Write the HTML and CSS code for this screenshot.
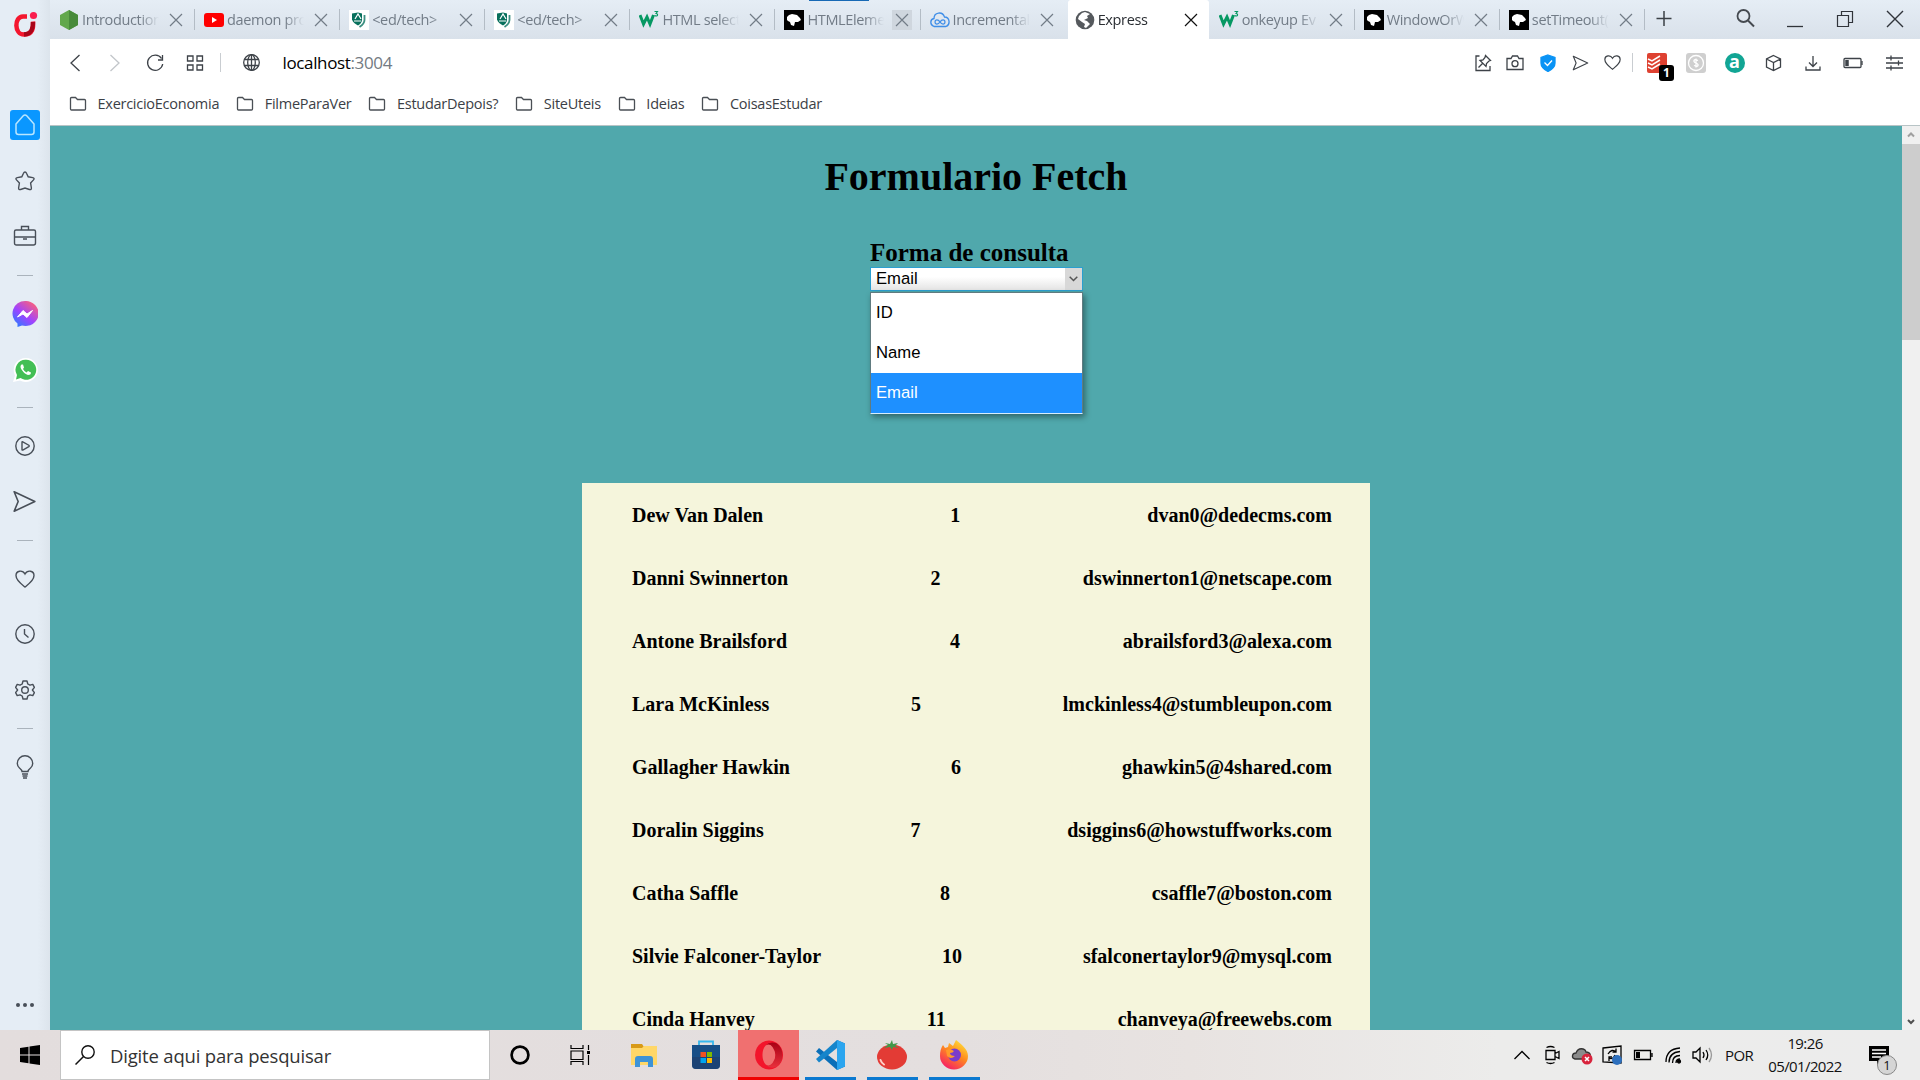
FILE: index.html
```html
<!DOCTYPE html>
<html lang="pt-BR">
<head>
<meta charset="utf-8">
<title>Express</title>
<link rel="stylesheet" href="styles.css">
</head>
<body>
<svg class="defs" width="0" height="0">
  <symbol id="x" viewBox="0 0 16 16"><path d="M2 2 14 14M14 2 2 14" stroke="currentColor" stroke-width="1.2" fill="none"/></symbol>
  <symbol id="folder" viewBox="0 0 18 16"><path d="M1.5 2.5a1 1 0 0 1 1-1h4l2 2h7a1 1 0 0 1 1 1v8.500a1 1 0 0 1-1 1h-13a1 1 0 0 1-1-1z" stroke="#4a4f55" stroke-width="1.3" fill="none"/></symbol>
  <symbol id="edtech" viewBox="0 0 20 20"><path fill="#fff" d="M0 0h20v20H0z"/><path fill="#08705c" d="M3 3.500 9 2.500l4 1v6c0 3-2 5-4 6-3-1.500-5-3-6-6z"/><path d="M6 9l3-5 3 5M5 11h7" stroke="#fff" fill="none" stroke-width="1.200"/><path d="M15.500 5v5c0 3-2 5-5 7" stroke="#3b8f80" stroke-width="1.800" fill="none"/></symbol>
  <symbol id="w3" viewBox="0 0 20 20"><path d="M1 5l3.500 9L8 7l3 7 3.500-9" stroke="#059862" stroke-width="3" fill="none"/><path d="M15.500 1.500h3l-1.500 2q2 .3 1.500 1.700t-3 .3" stroke="#059862" fill="none" stroke-width="1.100"/></symbol>
  <symbol id="mdn" viewBox="0 0 20 20"><path d="M0 0h20v20H0z"/><path fill="#fff" d="M3 10V7l2-2 3-1 5 1 3 3 1 2-3 2-3 0-1 4-3-1-1-3-2-1z"/></symbol>
  <symbol id="heart" viewBox="0 0 20 20"><path d="M10 18C7 15.500 1 11.500 1 6.500 1 1.500 7.500.5 10 5c2.500-4.500 9-3.500 9 1.500 0 5-6 9-9 11.500z" fill="none" stroke="currentColor" stroke-width="1.400"/></symbol>
  <symbol id="send" viewBox="0 0 20 20"><path d="M1 1.500 19 10 1 18.500 4.500 10z" fill="none" stroke="currentColor" stroke-width="1.400" stroke-linejoin="round"/></symbol>
</svg>

<div class="browser">
  <aside class="sidebar">
    <div class="logo"><svg width="26" height="26" viewBox="0 0 26 26"><path d="M14 5.500H10C1 5.500 1 23.500 11 23.500c9 0 9.500-7 9-13" fill="none" stroke="#f4162e" stroke-width="4.500"/><path d="M20 11c0 6-1 12-9 12.500" fill="none" stroke="#a90519" stroke-width="4.300"/><circle cx="20.500" cy="4.500" r="3.600" fill="#fa1e4e"/></svg></div>
    <nav class="side-nav">
      <div class="item"><span class="home"><svg width="22" height="24" viewBox="0 0 22 24"><path d="M2 11 9 3q2-2 4 0l7 8v8q0 2.500-2.500 2.500h-13Q2 21.500 2 19z" fill="none" stroke="#b9e6ff" stroke-width="1.500"/></svg></span></div>
      <div class="item"><svg width="22" height="22" viewBox="0 0 22 22"><path d="M11 2q1 0 1.500 1.300l1.700 3.500 4.500.8q2.300.5.800 2.300L16.600 13l.8 5q0 2.200-2 1.500L11 18l-4.400 1.500q-2 .7-2-1.500l.8-5-2.900-3.100Q1 8.100 3.300 7.600l4.500-.8 1.700-3.500Q10 2 11 2z" fill="none" stroke="currentColor" stroke-width="1.400"/></svg></div>
      <div class="item"><svg width="24" height="22" viewBox="0 0 24 22"><path d="M3 5h18q1.500 0 1.500 1.500V18q0 2-2 2h-17q-2 0-2-2V6.500Q1.500 5 3 5zM8.500 5V1.500h7V5M1.500 12h21M10 14h4" fill="none" stroke="currentColor" stroke-width="1.400"/></svg></div>
      <hr>
      <div class="item"><svg width="26" height="26" viewBox="0 0 26 26"><defs><linearGradient id="mg" x1="0" y1="1" x2=".8" y2="0"><stop offset="0" stop-color="#1687ff"/><stop offset=".5" stop-color="#9f43ff"/><stop offset="1" stop-color="#ff6276"/></linearGradient></defs><path d="M13 0a13 12.500 0 1 1-3 24.500L5.500 26v-3.500A12.500 12.500 0 0 1 13 0z" fill="url(#mg)"/><path d="m5.500 16 5.500-6.500 4 3.500 5.500-3.500-5.500 7-4-3.500z" fill="#fff" stroke="#fff"/></svg></div>
      <div class="item"><svg width="26" height="26" viewBox="0 0 26 26"><path d="M14 1a12 12 0 1 1-6 22.500L1 25l2-6.500A12 12 0 0 1 14 1z" fill="#fff"/><path d="M14 2.800A10 10 0 1 1 8.500 21L4 22.500 5 18A10 10 0 0 1 14 2.800z" fill="#43bf55"/><path d="M9.500 7.500q-2 2 0 5 3 4.500 6.500 5.500 3 0 3-2.500l-3-1.500-1.500 1.500q-2-.8-3.500-3.500l1-1.500-1-3z" fill="#fff"/></svg></div>
      <hr>
      <div class="item"><svg width="20" height="20" viewBox="0 0 20 20"><circle cx="10" cy="10" r="9.200" fill="none" stroke="currentColor" stroke-width="1.400"/><path d="M7 6.200q0-.7.8-.4l6 3.400q.8.800 0 1.400l-6 3.500q-.8.200-.8-.5z" fill="none" stroke="currentColor" stroke-width="1.400"/></svg></div>
      <div class="item"><svg width="23" height="23"><use href="#send"/></svg></div>
      <hr>
      <div class="item"><svg width="20" height="20"><use href="#heart"/></svg></div>
      <div class="item"><svg width="20" height="20" viewBox="0 0 20 20" fill="none" stroke="currentColor" stroke-width="1.400"><circle cx="10" cy="10" r="9.200"/><path d="M9.500 5v5l4 3.500"/></svg></div>
      <div class="item"><svg width="20" height="20" viewBox="0 0 20 20" fill="none" stroke="currentColor" stroke-width="1.400"><circle cx="10" cy="10" r="3.300"/><path d="M8 1h4l.8 3 2.200 1.200 2.800-.8 1.600 3-2 2.600 2 2.600-1.600 3-2.800-.8L12.800 16l-.8 3H8l-.8-3L5 14.800l-2.800.8-1.600-3L2.600 10l-2-2.600 1.600-3 2.800.8L7.200 4z" stroke-linejoin="round"/></svg></div>
      <hr>
      <div class="item"><svg width="18" height="24" viewBox="0 0 18 24" fill="none" stroke="currentColor" stroke-width="1.400"><path d="M6 16.500q0-1.500-2.500-3.500Q1.300 11 1.300 8.500a7.700 7.700 0 0 1 15.400 0q0 2.500-2.200 4.500-2.500 2-2.500 3.500zM6 19h6M6.500 21h5M7 23h4"/></svg></div>
    </nav>
    <div class="more"><i></i><i></i><i></i></div>
  </aside>

  <div class="window">
    <header class="tabs">
      <div class="tab"><svg class="fav" viewBox="0 0 20 20"><path d="M10 0l9 5v10l-9 5-9-5V5z" fill="#62a84c"/><path d="M10 0l9 5v10l-9 5z" fill="#488b3b"/></svg><span>Introduction</span><svg class="close"><use href="#x"/></svg></div>
      <div class="tab"><svg class="fav" viewBox="0 0 20 20"><rect y="3" width="20" height="14" rx="3" fill="#f00"/><path d="M8 7l5 3-5 3z" fill="#fff"/></svg><span>daemon pro</span><svg class="close"><use href="#x"/></svg></div>
      <div class="tab"><svg class="fav"><use href="#edtech"/></svg><span>&lt;ed/tech&gt;</span><svg class="close"><use href="#x"/></svg></div>
      <div class="tab"><svg class="fav"><use href="#edtech"/></svg><span>&lt;ed/tech&gt;</span><svg class="close"><use href="#x"/></svg></div>
      <div class="tab"><svg class="fav"><use href="#w3"/></svg><span>HTML select</span><svg class="close"><use href="#x"/></svg></div>
      <div class="tab loading"><svg class="fav"><use href="#mdn"/></svg><span>HTMLEleme</span><svg class="close hover"><use href="#x"/></svg></div>
      <div class="tab nosep"><svg class="fav" viewBox="0 0 20 20" fill="none" stroke="#3f8ee8" stroke-width="1.300"><path d="M4 16.500C-.5 15 0 9 4 8.500 4 2 12.500 1 14.500 7c5.500 0 6 8 1.500 9.500z"/><path d="M10 12c-2-3-5-2.500-5 0s3 3 5 0 5-2.500 5 0-3 3-5 0z"/></svg><span>Incremental</span><svg class="close"><use href="#x"/></svg></div>
      <div class="tab active"><svg class="fav" viewBox="0 0 20 20"><circle cx="10" cy="10" r="9.300" fill="#55595d"/><path d="M10 2l5 2-3 2 1 2-4 2 3 1 3 3-4 4-2-1 1-3-3-2-4-3 1-3 3-3z" fill="#fff"/></svg><span>Express</span><svg class="close"><use href="#x"/></svg></div>
      <div class="tab"><svg class="fav"><use href="#w3"/></svg><span>onkeyup Ev</span><svg class="close"><use href="#x"/></svg></div>
      <div class="tab"><svg class="fav"><use href="#mdn"/></svg><span>WindowOrW</span><svg class="close"><use href="#x"/></svg></div>
      <div class="tab"><svg class="fav"><use href="#mdn"/></svg><span>setTimeout(</span><svg class="close"><use href="#x"/></svg></div>
      <svg class="plus" width="36" height="38" viewBox="0 0 36 38"><path d="M18 11v15M10.500 18.500h15" stroke="#3b4046" stroke-width="1.500"/></svg>
      <div class="win">
        <svg width="50" height="36" viewBox="0 0 50 36"><circle cx="23.500" cy="16" r="6" fill="none" stroke="#454a50" stroke-width="1.800"/><path d="M28 20.500l6 6" stroke="#454a50" stroke-width="2"/></svg>
        <svg width="50" height="36" viewBox="0 0 50 36"><path d="M17 26.500h16" stroke="#30343a" stroke-width="1.300"/></svg>
        <svg width="50" height="36" viewBox="0 0 50 36"><path d="M17.500 15.500h11v11h-11zM21.500 15.500v-4h11v11h-4" fill="none" stroke="#30343a" stroke-width="1.200"/></svg>
        <svg width="50" height="36" viewBox="0 0 50 36"><path d="M17 11l16 16M33 11 17 27" stroke="#30343a" stroke-width="1.400"/></svg>
      </div>
    </header>

    <div class="toolbar">
      <div class="cell"><svg width="12" height="18" viewBox="0 0 12 18"><path d="M10.500 1 2 9l8.500 8"/></svg></div>
      <div class="cell dim"><svg width="12" height="18" viewBox="0 0 12 18"><path d="M1.500 1 10 9l-8.500 8"/></svg></div>
      <div class="cell"><svg width="18" height="18" viewBox="0 0 18 18"><path d="M15.500 4.500A7.600 7.600 0 1 0 16.700 10M16.500 1v5H12"/></svg></div>
      <div class="cell"><svg width="18" height="16" viewBox="0 0 18 16"><path d="M1.500 1h5.500v5H1.500zM11 1h5.500v5H11zM1.500 10H7v5H1.500zM11 10h5.500v5H11z"/></svg></div>
      <div class="bar"></div>
      <svg class="globe" width="17" height="17" viewBox="0 0 17 17"><circle cx="8.500" cy="8.500" r="7.800"/><ellipse cx="8.500" cy="8.500" rx="3.800" ry="7.800"/><path d="M8.500.5v16M1.500 5.500h14M1.500 11.500h14"/></svg>
      <div class="url">localhost<b>:3004</b></div>
      <div class="tools">
        <div class="t"><svg width="18" height="18" viewBox="0 0 18 18"><path d="M5.500 2H2v14.500h14V12M11.500 1.500l5 5-1.500.5-2.500 2.500-.5 3L6 6.500l3-.5 2-2.500zM8.500 9.500 4.500 13.500"/></svg></div>
        <div class="t"><svg width="18" height="16" viewBox="0 0 18 16"><path d="M1 3.500h4L6.500 1h5L13 3.500h4v11H1z"/><circle cx="9" cy="8.700" r="3"/></svg></div>
        <div class="t"><svg width="16" height="18" viewBox="0 0 16 18"><path d="M8 1l7 2.500V9c0 4-3 6.500-7 8.500C4 15.500 1 13 1 9V3.500z" style="fill:#0a93f5;stroke:#0a93f5"/><path d="M4.500 8.500l3 3 4.500-5" style="stroke:#fff"/></svg></div>
        <div class="t"><svg width="17" height="16"><use href="#send"/></svg></div>
        <div class="t"><svg width="17" height="17"><use href="#heart"/></svg></div>
        <div class="bar"></div>
        <div class="ext todo"><svg width="20" height="20" viewBox="0 0 20 20"><rect width="20" height="20" rx="2" style="fill:#de4131;stroke:none"/><path d="M1 6l4 2 8-5M1 10l4 2 8-5M1 14l4 2 8-5" style="stroke:#fff;stroke-width:1.500"/></svg><em>1</em></div>
        <div class="ext"><svg width="20" height="20" viewBox="0 0 20 20"><rect width="20" height="20" rx="3" style="fill:#cfcfcf;stroke:none"/><circle cx="10" cy="10" r="7.500" style="stroke:#fff"/><path d="M12 7.500q-3.500-1.500-4 0t2 2.500 2 2.500-4 0M10 5.500v9" style="stroke:#fff"/></svg></div>
        <div class="ext"><span class="acirc">a</span></div>
        <div class="ext"><svg width="17" height="18" viewBox="0 0 17 18"><path d="M8.500 1.500 15.500 5v8l-7 3.500-7-3.500V5zM1.500 5l7 3.500 7-3.500M8.500 8.500v8"/></svg></div>
        <div class="ext w41"><svg width="16" height="16" viewBox="0 0 16 16"><path d="M8 1v10M4 7.500 8 11.500l4-4M1 11.500V15h14v-3.500"/></svg></div>
        <div class="ext w41"><svg width="21" height="12" viewBox="0 0 21 12"><rect x="1" y="1.500" width="17" height="9" rx="1"/><path d="M19 4v4"/><path d="M4 3v6" style="stroke-width:3.500"/></svg></div>
        <div class="ext w41"><svg width="17" height="16" viewBox="0 0 17 16"><path d="M0 3h17M0 8h17M0 13h17M5 .5v5M12.500 5.500v5M5 10.500v5"/></svg></div>
      </div>
    </div>

    <div class="bookmarks">
      <div class="bm"><svg><use href="#folder"/></svg><span>ExercicioEconomia</span></div>
      <div class="bm"><svg><use href="#folder"/></svg><span>FilmeParaVer</span></div>
      <div class="bm"><svg><use href="#folder"/></svg><span>EstudarDepois?</span></div>
      <div class="bm"><svg><use href="#folder"/></svg><span>SiteUteis</span></div>
      <div class="bm"><svg><use href="#folder"/></svg><span>Ideias</span></div>
      <div class="bm"><svg><use href="#folder"/></svg><span>CoisasEstudar</span></div>
    </div>

    <div class="viewport">
      <main class="page">
        <h1>Formulario Fetch</h1>
        <div class="field">
          <label>Forma de consulta</label>
          <div class="select"><span>Email</span><i><svg width="9" height="6" viewBox="0 0 9 6"><path d="M.7.700 4.500 4.500 8.300.700" fill="none" stroke="#555" stroke-width="1.500"/></svg></i>
            <ul class="options"><li>ID</li><li>Name</li><li class="sel">Email</li></ul>
          </div>
        </div>
        <section class="list">
          <div class="row"><span>Dew Van Dalen</span><span>1</span><span>dvan0@dedecms.com</span></div>
          <div class="row"><span>Danni Swinnerton</span><span>2</span><span>dswinnerton1@netscape.com</span></div>
          <div class="row"><span>Antone Brailsford</span><span>4</span><span>abrailsford3@alexa.com</span></div>
          <div class="row"><span>Lara McKinless</span><span>5</span><span>lmckinless4@stumbleupon.com</span></div>
          <div class="row"><span>Gallagher Hawkin</span><span>6</span><span>ghawkin5@4shared.com</span></div>
          <div class="row"><span>Doralin Siggins</span><span>7</span><span>dsiggins6@howstuffworks.com</span></div>
          <div class="row"><span>Catha Saffle</span><span>8</span><span>csaffle7@boston.com</span></div>
          <div class="row"><span>Silvie Falconer-Taylor</span><span>10</span><span>sfalconertaylor9@mysql.com</span></div>
          <div class="row"><span>Cinda Hanvey</span><span>11</span><span>chanveya@freewebs.com</span></div>
        </section>
      </main>
      <div class="scroll">
        <svg width="18" height="18" viewBox="0 0 18 18"><path d="M6 10.500 9 7.500l3 3" fill="none" stroke="#a0a0a0" stroke-width="2"/></svg>
        <div class="thumb"></div>
        <svg class="down" width="18" height="18" viewBox="0 0 18 18"><path d="M6 8l3 3 3-3" fill="none" stroke="#505050" stroke-width="2"/></svg>
      </div>
    </div>
  </div>
</div>

<footer class="taskbar">
  <div class="start"><svg width="20" height="20" viewBox="0 0 20 20"><path d="M0 3l8.500-1.200v7.700H0zM9.500 1.600 20 0v9.500H9.500zM0 10.500h8.500v7.700L0 17zM9.500 10.500H20V20L9.500 18.400z"/></svg></div>
  <div class="search"><svg width="20" height="20" viewBox="0 0 20 20"><circle cx="13" cy="7" r="6.200" fill="none" stroke="#111" stroke-width="1.400"/><path d="M8.500 11.500.5 19.500" stroke="#111" stroke-width="1.500"/></svg><span>Digite aqui para pesquisar</span></div>
  <div class="app"><svg width="20" height="20" viewBox="0 0 20 20"><circle cx="10" cy="10" r="8.400" fill="none" stroke="#000" stroke-width="2.700"/></svg></div>
  <div class="app"><svg width="21" height="20" viewBox="0 0 21 20" fill="none" stroke="#000" stroke-width="1.200"><path d="M1 0v3.500h12V0M1 6h12v8.500H1zM1 20v-3.500h12V20M18.500 0v5M18.500 10v10"/><path d="M17 6h3v3h-3z" fill="#000" stroke="none"/></svg></div>
  <div class="app wide files"><svg width="28" height="24" viewBox="0 0 28 24"><path d="M1 1h11l2 3-2 2H1z" fill="#d89a18"/><path d="M1 5h11l2-2h13v19H1z" fill="#ffd768"/><path d="M5 24v-8q0-3 3-3h12q3 0 3 3v8h-5v-5h-8v5z" fill="#3e93d6"/></svg></div>
  <div class="app wide"><svg width="30" height="30" viewBox="0 0 30 30"><path d="M8 6V1.500h14V6" fill="none" stroke="#35b6ed" stroke-width="1.800"/><path d="M1 5h28v20q0 4-4 4H5q-4 0-4-4z" fill="#174e87"/><path d="M1 17h28v8q0 4-4 4H5q-4 0-4-4z" fill="#203c69" opacity=".6"/><path d="M9.500 12H15v5H9.500z" fill="#f25022"/><path d="M16 12h5v5h-5z" fill="#7fba00"/><path d="M9.500 18H15v5H9.500z" fill="#00a4ef"/><path d="M16 18h5v5h-5z" fill="#ffb900"/></svg></div>
  <div class="app wide opera"><svg width="30" height="30" viewBox="0 0 30 30"><defs><linearGradient id="og" x1="0" y1="0" x2="0" y2="1"><stop offset="0" stop-color="#a80014"/><stop offset="1" stop-color="#e8303c"/></linearGradient></defs><path fill-rule="evenodd" d="M15 .500a14 14.500 0 1 0 .1 0zM15 4a6.500 11 0 1 1-.1 0z" fill="#f3142b"/><path d="M11.500 5.500Q16 .500 23 3.500a14 14.500 0 0 1 0 23Q16 29.500 11.500 24.500q4 2.500 7-1.500 3-4.500 3-8t-3-8q-3-4-7-1.500z" fill="url(#og)"/></svg></div>
  <div class="app wide run"><svg width="30" height="30" viewBox="0 0 30 30"><path d="M22 0l8 3.500v23L22 30 1 11.500 4 8l18 14z" fill="#0b6fb8"/><path d="M22 8 4 22.500 1 19 22 0z" fill="#1685cb"/><path d="M22 0l8 3.500v23L22 30z" fill="#2ba5ef"/></svg></div>
  <div class="app wide run"><svg width="30" height="30" viewBox="0 0 30 30"><ellipse cx="15" cy="17" rx="15" ry="12.500" fill="#e33b35"/><path d="M15 0l1 4 5-1-3 3 4 2-6-1-1 3-2-3-6 1 4-3-3-2 5 1z" fill="#42974a"/><path d="M3.500 20q1 3 3.500 4.500" fill="none" stroke="#ffd0c8" stroke-width="2" stroke-linecap="round"/></svg></div>
  <div class="app wide run"><svg width="30" height="30" viewBox="0 0 30 30"><defs><linearGradient id="ff" x1=".8" y1="0" x2=".2" y2="1"><stop offset="0" stop-color="#ffe43c"/><stop offset=".45" stop-color="#ff8a1e"/><stop offset="1" stop-color="#f5156c"/></linearGradient></defs><path d="M4 5l2 3 3-1 1-4 4 3 3-6c5 4 12 9 12 16a14 13.500 0 0 1-28 0Q1 9 4 5z" fill="url(#ff)"/><circle cx="15.500" cy="15" r="6.500" fill="#7a3ccb"/><path d="M7 10q4-2 8 1-1 2-4 2 0 3 5 3-4 4-8 0z" fill="#ff9a2a"/></svg></div>
  <div class="tray">
    <svg width="32" height="30" viewBox="0 0 32 30"><path d="M8.500 19 16 11.500l7.500 7.500"/></svg>
    <svg width="30" height="30" viewBox="0 0 30 30"><path d="M8 10.500h9v9H8zM17 13.500l4-2v7l-4-2M8.500 7.500q4-2 8 0M8.500 22.500q4 2 8 0"/></svg>
    <svg width="30" height="30" viewBox="0 0 30 30"><path d="M7 19c-4-1-3-6 1-6 2-6 9-5 10-1 5 0 6 6 2 7z" style="fill:#8b8b8b;stroke:#333"/><circle cx="19" cy="19" r="5.500" style="fill:#d8243c;stroke:none"/><path d="M17 17l4 4M21 17l-4 4" style="stroke:#fff;stroke-width:1.500"/></svg>
    <svg width="30" height="30" viewBox="0 0 30 30"><path d="M5 8l18-2v17L5 22zM10 14q4-6 8-2M18 8.500V12h-3.500M17 15q-2 5-6 3M11 21v-4h3"/><circle cx="19" cy="20" r="5" style="fill:#2d6fbd;stroke:none"/></svg>
    <svg width="30" height="30" viewBox="0 0 30 30"><path d="M6.500 10.500h16v9h-16zM24 13v4"/><path d="M8 12h4v6H8z" style="fill:#000;stroke:none"/></svg>
    <svg width="30" height="30" viewBox="0 0 30 30"><path d="M8 22Q8 9 22 8M11 22.500q0-10 11-11M14.500 23q0-7.500 7.500-7.500M18 23q0-4 4-4"/><circle cx="21" cy="21.500" r="1.500" style="fill:#000"/></svg>
    <svg width="30" height="30" viewBox="0 0 30 30"><path d="M5 12h3l4-4v14l-4-4H5zM15 12q2 3 0 6M18 10q3.500 5 0 10"/><path d="M21 8q5 7 0 14" style="stroke:#999"/></svg>
    <span class="lang">POR</span>
    <div class="clock"><span>19:26</span><span>05/01/2022</span></div>
    <div class="notif"><svg width="22" height="20" viewBox="0 0 22 20"><path d="M1 1h20v15h-8l-4 4v-4H1z" style="fill:#000;stroke:none"/><path d="M4 5h14M4 8.500h14M4 12h9" style="stroke:#fff"/></svg><em>1</em></div>
  </div>
</footer>
</body>
</html>
```
FILE: styles.css
```css
* { box-sizing: border-box; }
body { margin: 0; width: 1920px; height: 1080px; overflow: hidden; display: flex; flex-direction: column; font-family: "Open Sans", "Noto Sans", sans-serif; background: #e5ecf4; }
svg { display: block; flex: none; }
em, i { font-style: normal; }
.defs { position: absolute; }
.browser { display: flex; height: 1030px; }

.sidebar { width: 50px; display: flex; flex-direction: column; align-items: center; color: #484f58; background: linear-gradient(90deg, #e5edf5 75%, #dce4ec); }
.logo { height: 97px; padding: 11px 0 0 2px; }
.side-nav { width: 49px; margin-right: 1px; }
.item { height: 55.7px; display: flex; align-items: center; justify-content: center; }
.side-nav hr { width: 16px; height: 1px; margin: 10px auto; border: 0; background: #aab3bc; }
.side-nav hr:nth-of-type(1) { margin: 10.5px auto; }
.home { width: 30px; height: 30px; border-radius: 3px; background: #0a97ff; display: flex; align-items: center; justify-content: center; }
.more { margin-top: auto; height: 50px; display: flex; align-items: center; gap: 3px; }
.more i { width: 4px; height: 4px; border-radius: 50%; background: #484f58; }

.window { flex: 1; min-width: 0; display: flex; flex-direction: column; background: #fff; }
.tabs { height: 39px; display: flex; background: linear-gradient(#e5edf5, #d9e1ea); }
.tab { width: 145.1px; flex: none; padding: 0 11px 0 9px; display: flex; align-items: center; position: relative; color: #727c87; font-size: 14.500px; }
.tab::after { content: ""; position: absolute; right: 0; top: 9px; width: 1px; height: 21px; background: #b3bcc5; }
.tab span { margin-left: 3px; width: 77px; height: 24px; line-height: 24px; overflow: hidden; white-space: nowrap; letter-spacing: -.36px; -webkit-mask-image: linear-gradient(90deg, #000 75%, transparent); }
.fav { width: 20px; height: 20px; }
.close { width: 16px; height: 16px; margin-left: auto; }
.hover { width: 20px; height: 20px; padding: 2px; margin-right: -2px; background: #cfd6de; }
.loading::before { content: ""; position: absolute; left: 34px; top: 0; width: 60px; height: 1px; background: #1769b5; }
.nosep::after, .active::after { display: none; }
.active { width: 141px; margin: 0 1px 0 2px; padding: 0 10px 0 7px; background: #fff; color: #2a2e33; border-radius: 3px 3px 0 0; }
.active .close { color: #111; }
.plus { margin-left: 1px; }
.win { margin-left: auto; display: flex; }

.toolbar { height: 47px; display: flex; align-items: center; padding-left: 5px; color: #3d4248; }
.toolbar svg { fill: none; stroke: currentColor; stroke-width: 1.300px; }
.cell { width: 40px; display: flex; justify-content: center; }
.dim { color: #c2c6ca; }
.bar { width: 1px; height: 19px; background: #c9cdd1; margin-left: 5px; }
.globe { margin: 0 23px 0 21.500px; }
.url { font-size: 17px; letter-spacing: -.36px; color: #000; }
.url b { font-weight: 400; color: #737a82; }
.tools { margin-left: auto; display: flex; align-items: center; padding-right: 5.500px; }
.t { width: 32.500px; display: flex; justify-content: center; }
.tools .bar { margin: 0 4px 0 3px; }
.ext { width: 39px; display: flex; justify-content: center; position: relative; }
.w41 { width: 40.500px; }
.todo em { position: absolute; left: 22px; top: 12px; width: 15px; height: 16px; border-radius: 3px; background: #000; color: #fff; font: bold 12px/16px "Open Sans", sans-serif; text-align: center; }
.acirc { width: 20px; height: 20px; border-radius: 50%; background: #12a594; color: #fff; font: bold 18px/17px "Open Sans", sans-serif; text-align: center; }

.bookmarks { height: 40px; display: flex; align-items: center; padding: 0 0 4px 19px; gap: 17px; color: #3b4046; font-size: 14.500px; border-bottom: 1px solid #b8c4c6; }
.bm { display: flex; align-items: center; gap: 10.500px; }
.bm svg { width: 18px; height: 16px; }
.bm span { letter-spacing: -.26px; }

.viewport { flex: 1; min-height: 0; display: flex; }
.page { flex: 1; background: #50a8ac; overflow: hidden; display: flex; flex-direction: column; align-items: center; font-family: "Liberation Serif", "Times New Roman", serif; font-weight: bold; color: #000; }
h1 { margin: 28px 0 0; font-size: 40px; line-height: 46px; }
.field { width: 212px; margin-top: 38px; height: 53px; }
.field label { display: block; font-size: 25px; line-height: 29px; white-space: nowrap; }
.select { width: 213px; height: 24px; position: relative; display: flex; justify-content: space-between; border: 1px solid #2b9fd0; background: linear-gradient(#fff 40%, #e4e4e4); font: 16.670px/22px "Liberation Sans", Arial, sans-serif; }
.select > span { padding-left: 5px; }
.select i { width: 17px; background: #d8d8d8; display: flex; align-items: center; justify-content: center; }
.options { position: absolute; left: -1px; top: 24px; width: 213px; margin: 0; padding: 0; list-style: none; border: 1px solid #607b80; border-bottom-color: #d5edff; background: #fff; box-shadow: 2px 3px 6px rgba(0,0,0,.4); }
.options li { height: 40px; line-height: 39px; padding-left: 5px; }
.options .sel { background: #1e90ff; color: #fff; }
.list { width: 788px; margin-top: 192px; padding: 0 38px 0 50px; background: #f5f5dc; flex: none; font-size: 20px; }
.row { height: 63px; line-height: 65px; display: flex; justify-content: space-between; }
.scroll { width: 18px; background: #f0f0f0; display: flex; flex-direction: column; }
.thumb { height: 196px; background: #cdcdcd; }
.down { margin-top: auto; }

.taskbar { height: 50px; display: flex; color: #111; background: linear-gradient(90deg, #e3dddd, #e4dfdf 50%, #e8e3e1 62%, #ececeb 78%, #ececec); }
.start { width: 60px; display: flex; align-items: center; justify-content: center; }
.search { width: 430px; border: 1px solid #c4c4c4; background: #fff; display: flex; align-items: center; padding-left: 14px; gap: 15px; font-size: 18.500px; color: #333; }
.search span { letter-spacing: -.18px; }
.app { width: 60px; display: flex; align-items: center; justify-content: center; position: relative; }
.wide { width: 62px; }
.files { margin-left: 3px; }
.opera { width: 61px; background: #f07070; border-bottom: 3px solid #f00000; padding-top: 3px; margin-left: 1px; }
.run::after { content: ""; position: absolute; left: 6px; bottom: 0; width: 51px; height: 3px; background: #0b79d0; }
.tray { margin-left: auto; display: flex; align-items: center; font-size: 15px; }
.tray svg { fill: none; stroke: #000; stroke-width: 1.300px; }
.lang { width: 40px; padding-left: 7px; letter-spacing: -.6px; }
.clock { width: 94px; display: flex; flex-direction: column; align-items: center; line-height: 23px; letter-spacing: -.6px; }
.notif { width: 68px; padding-left: 16px; position: relative; }
.notif em { position: absolute; left: 25px; top: 10px; width: 20px; height: 20px; border: 1px solid #888; border-radius: 50%; background: #d5d5d5; font-size: 13px; line-height: 18px; text-align: center; }
```
